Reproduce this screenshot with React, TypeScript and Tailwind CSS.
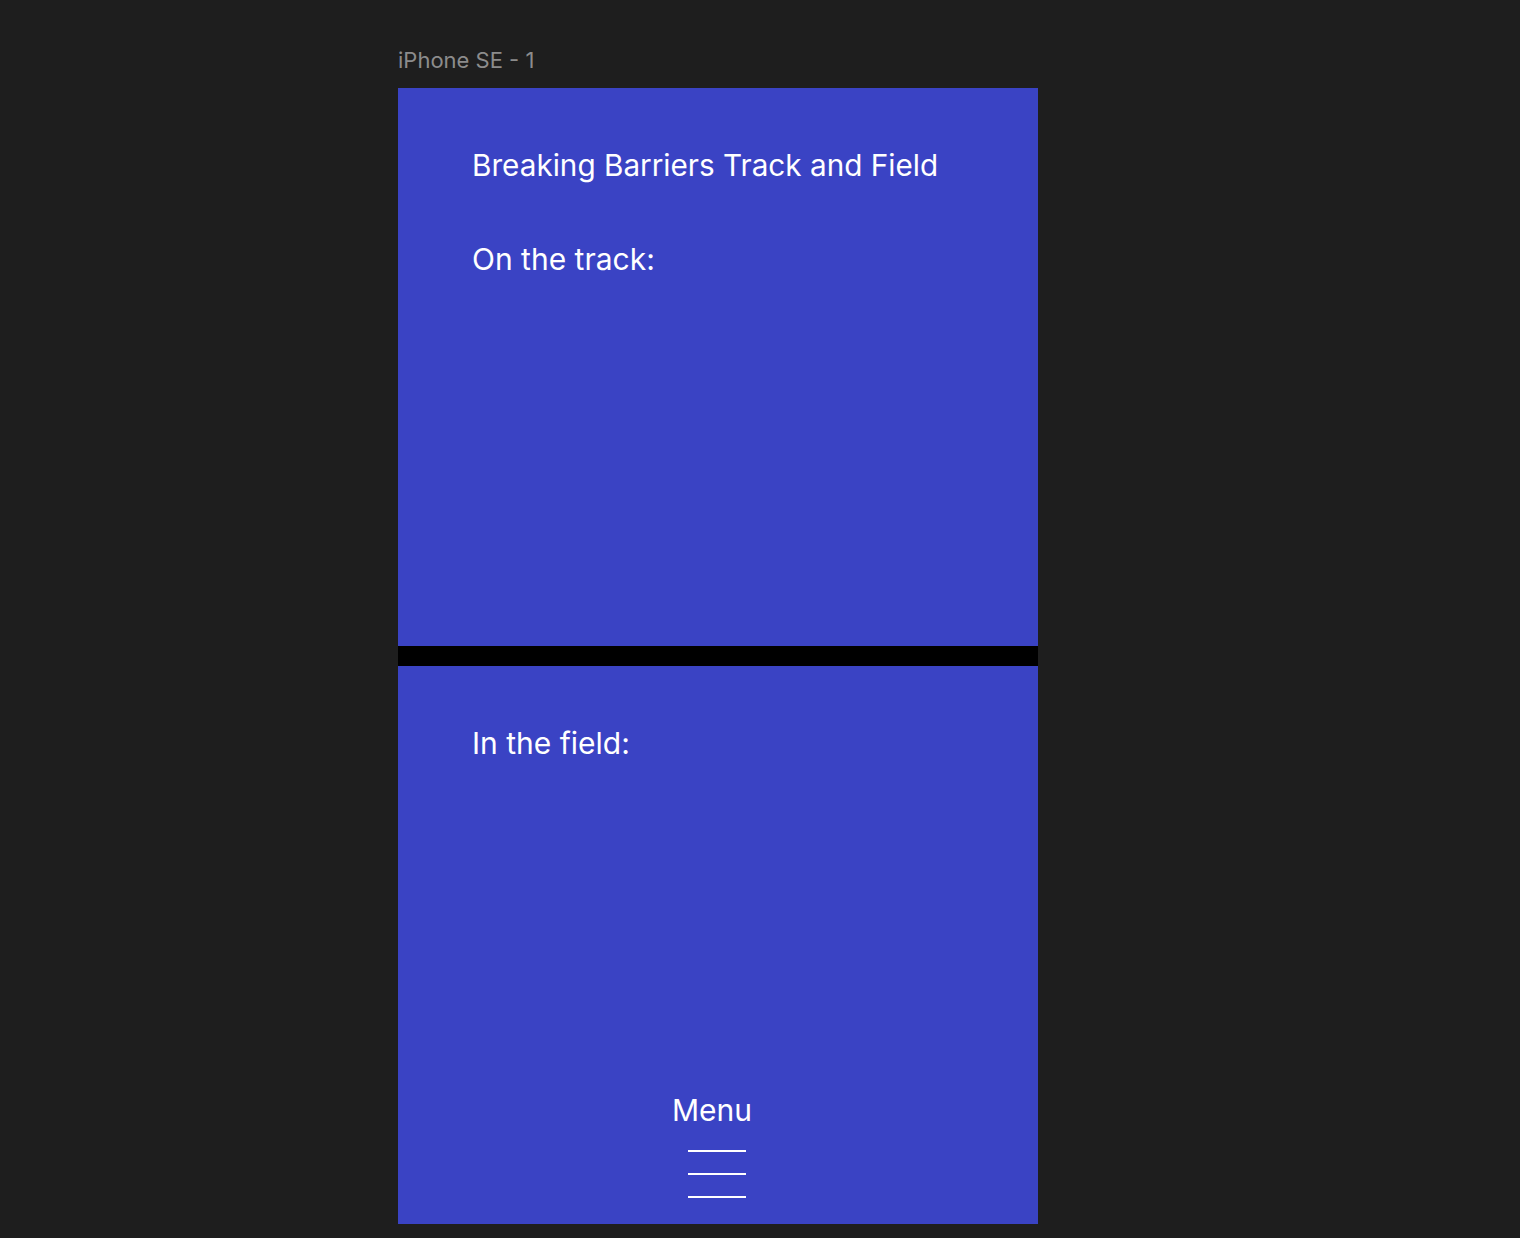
export default function App() {
  return (
    <div className="min-h-[1238px] w-full bg-[#1e1e1e] font-['Inter',sans-serif]">
      <div className="ml-[398px] pt-[47px]">
        <div className="text-[22px] leading-[26px] text-[#8c8c8c]">iPhone SE - 1</div>
        <div className="mt-[15px] flex w-[640px] flex-col">
          {/* top panel */}
          <section className="h-[558px] bg-[#3a43c4] pl-[74px] pt-[57px] text-white">
            <h1 className="text-[29.7px] leading-[40px] font-normal">Breaking Barriers Track and Field</h1>
            <h2 className="mt-[54px] text-[30px] leading-[40px] font-normal">On the track:</h2>
          </section>
          <div className="h-[20px] bg-black" />
          {/* bottom panel */}
          <section className="flex h-[558px] flex-col bg-[#3a43c4] pt-[57px] text-white">
            <h2 className="pl-[74px] text-[30px] leading-[40px] font-normal">In the field:</h2>
            <div className="mt-auto mb-[26px] flex flex-col items-center">
              <div className="ml-[-12px] text-[30px] leading-[40px]">Menu</div>
              <div className="mt-[20px] ml-[-2px] flex w-[58px] flex-col gap-[21px]">
                <div className="h-[2px] bg-white" />
                <div className="h-[2px] bg-white" />
                <div className="h-[2px] bg-white" />
              </div>
            </div>
          </section>
        </div>
      </div>
    </div>
  );
}
